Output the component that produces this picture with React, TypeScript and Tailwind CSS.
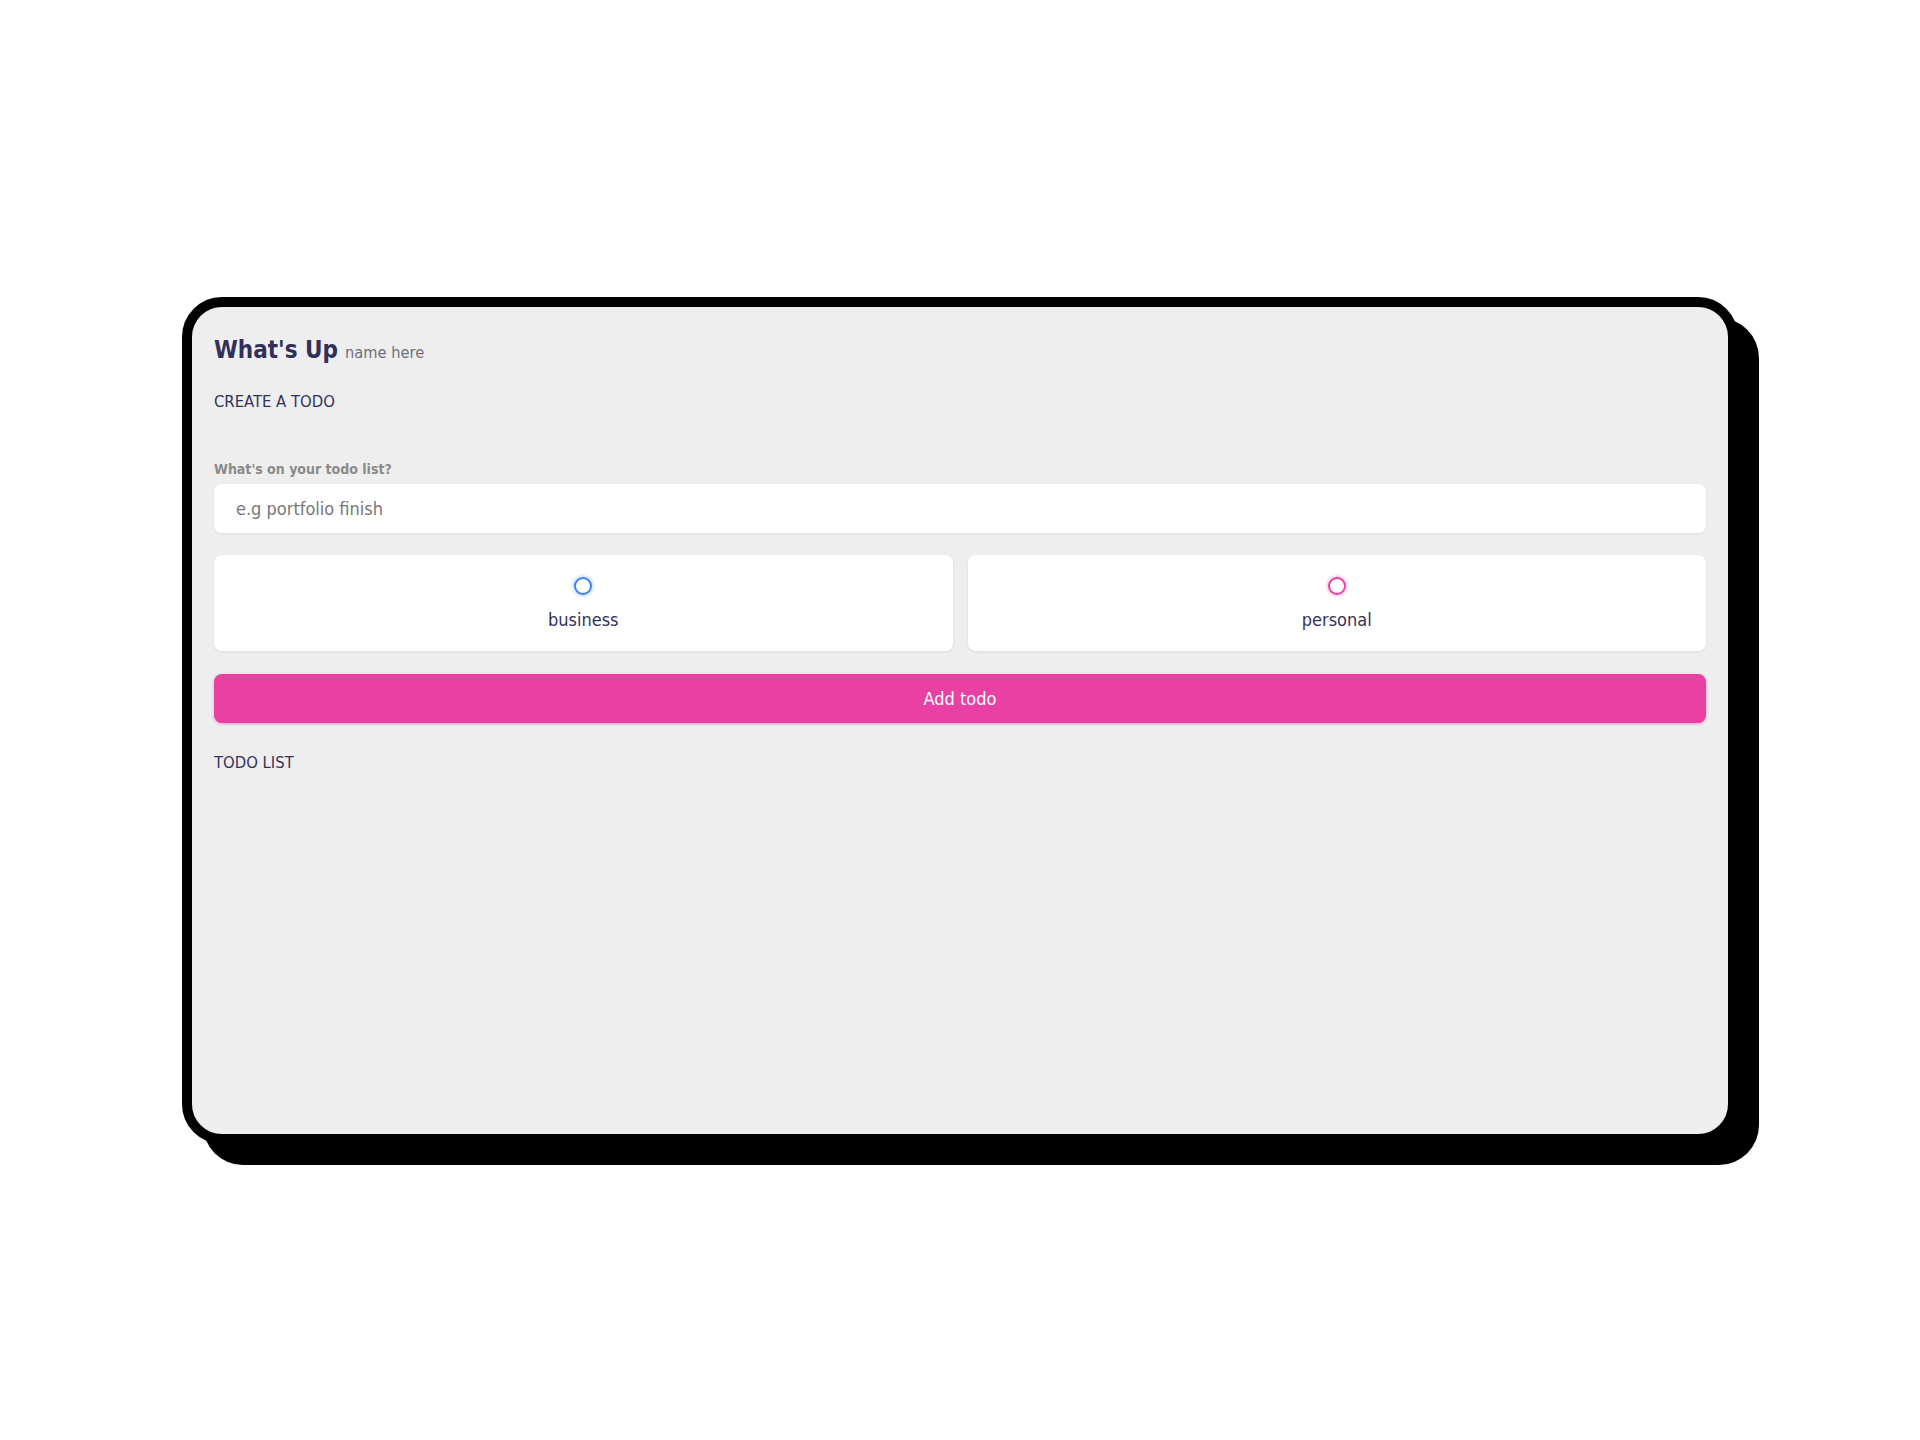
import React, { useState } from "react";

// --- types ---

type Category = "business" | "personal";

interface Todo {
  id: number;
  content: string;
  category: Category;
  done: boolean;
}

const font = { fontFamily: '"DejaVu Sans Condensed", "DejaVu Sans", Verdana, sans-serif' };

const App: React.FC = () => {
  const [content, setContent] = useState("");
  const [category, setCategory] = useState<Category | null>(null);
  const [todos, setTodos] = useState<Todo[]>([]);

  const addTodo = () => {
    if (!content.trim() || !category) return;
    setTodos([...todos, { id: Date.now(), content, category, done: false }]);
    setContent("");
    setCategory(null);
  };

  return (
    <div className="min-h-screen bg-white flex items-center justify-center" style={font}>
      {/* kartu utama */}
      <main className="w-[1556px] h-[847px] border-[10px] border-black rounded-[40px] bg-[#eeeeee] shadow-[21px_21px_0_#000] px-[22px] pt-[27px] flex flex-col">
        <section className="flex items-baseline gap-[7px]">
          <h2 className="text-[24px] leading-[32px] font-bold text-[#30305a]">What's Up</h2>
          <span className="text-[16.3px] leading-[24px] text-[#6f6f7a]">name here</span>
        </section>

        <section className="mt-[24px] flex flex-col">
          <h3 className="text-[16.5px] leading-[24px] text-[#33335a]">CREATE A TODO</h3>

          <form
            className="flex flex-col"
            onSubmit={(e) => {
              e.preventDefault();
              addTodo();
            }}
          >
            <h4 className="mt-[45px] text-[14px] leading-[20px] font-bold text-[#8a8a8a]">
              What's on your todo list?
            </h4>
            <input
              type="text"
              value={content}
              onChange={(e) => setContent(e.target.value)}
              placeholder="e.g portfolio finish"
              className="mt-[5px] h-[49px] w-full rounded-lg bg-white pl-[22px] pr-4 text-[18px] text-[#33335a] placeholder:text-[#777777] shadow-[0_1px_3px_rgba(0,0,0,0.08)] outline-none"
            />

            {/* pilihan kategori */}
            <div className="mt-[22px] grid grid-cols-2 gap-[15px]">
              {(["business", "personal"] as Category[]).map((c) => {
                const isBiz = c === "business";
                const checked = category === c;
                return (
                  <label
                    key={c}
                    className="h-[96px] rounded-lg bg-white shadow-[0_1px_3px_rgba(0,0,0,0.08)] flex flex-col items-center pt-[22px] cursor-pointer"
                  >
                    <input
                      type="radio"
                      name="category"
                      value={c}
                      checked={checked}
                      onChange={() => setCategory(c)}
                      className="hidden"
                    />
                    <span
                      className={`w-[18px] h-[18px] rounded-full border-2 ${
                        isBiz
                          ? "border-[#3b82f6] shadow-[0_0_4px_rgba(59,130,246,0.6)]"
                          : "border-[#ea40a4] shadow-[0_0_4px_rgba(234,64,164,0.6)]"
                      } ${checked ? (isBiz ? "bg-[#3b82f6]" : "bg-[#ea40a4]") : ""}`}
                    ></span>
                    <span className="mt-[11px] text-[18px] leading-[28px] text-[#33335a]">{c}</span>
                  </label>
                );
              })}
            </div>

            <button
              type="submit"
              className="mt-[23px] h-[49px] w-full rounded-lg bg-[#ea40a4] text-white text-[18px] shadow-[0_1px_3px_rgba(234,64,164,0.5)] cursor-pointer"
            >
              Add todo
            </button>
          </form>
        </section>

        <section className="mt-[28px] flex flex-col">
          <h3 className="text-[16.5px] leading-[24px] text-[#33335a]">TODO LIST</h3>
          <div className="flex flex-col gap-3 mt-3">
            {todos.map((todo) => (
              <div key={todo.id} className="flex items-center gap-4 rounded-lg bg-white px-5 py-3">
                <input
                  type="checkbox"
                  checked={todo.done}
                  onChange={() =>
                    setTodos(todos.map((t) => (t.id === todo.id ? { ...t, done: !t.done } : t)))
                  }
                />
                <span className="flex-1 text-[18px] text-[#33335a]">{todo.content}</span>
                <button
                  className="text-white bg-[#ea40a4] rounded-md px-3 py-1 text-sm"
                  onClick={() => setTodos(todos.filter((t) => t.id !== todo.id))}
                >
                  Delete
                </button>
              </div>
            ))}
          </div>
        </section>
      </main>
    </div>
  );
};

export default App;
